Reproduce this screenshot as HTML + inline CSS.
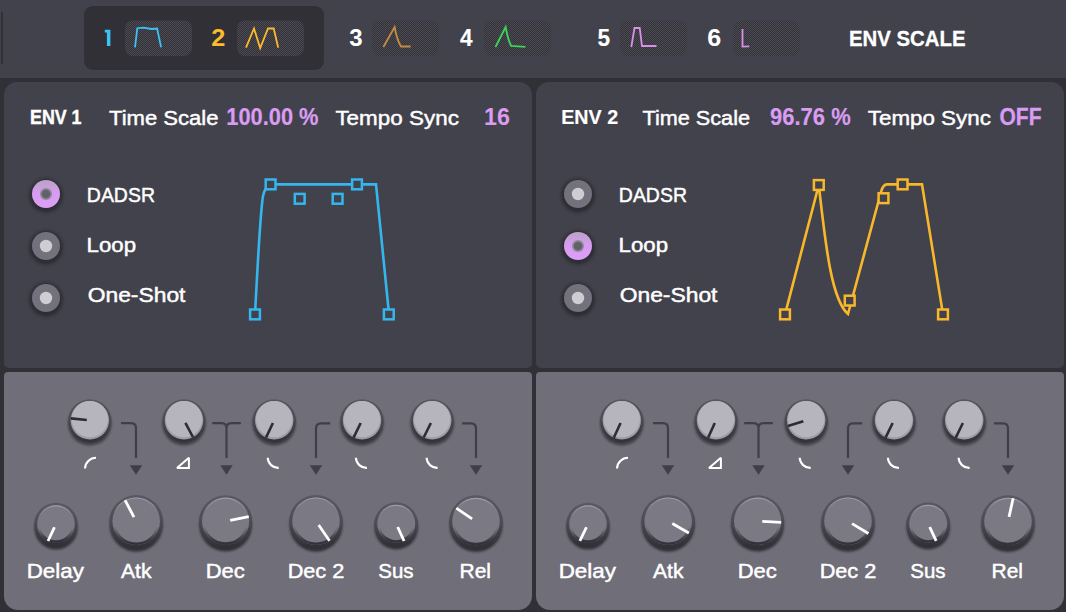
<!DOCTYPE html>
<html><head><meta charset="utf-8"><title>Envelope Editor</title>
<style>
html,body{margin:0;padding:0;}
body{width:1066px;height:612px;overflow:hidden;background:#303036;position:relative;font-family:"Liberation Sans",sans-serif;}
.topbar{position:absolute;left:0;top:0;width:1066px;height:78px;background:#42424c;}
.vbar{position:absolute;left:1px;top:12px;width:2px;height:52px;background:#313036;}
.tabgrp{position:absolute;left:84px;top:6px;width:240px;height:64px;border-radius:9px;background:#313036;}
.ptop{position:absolute;top:82px;width:528px;height:286px;background:#42424c;border-radius:13px 13px 5px 5px;}
.pbot{position:absolute;top:372px;width:528px;height:238px;background:#6f6e79;border-radius:4px 4px 14px 14px;}
svg.ov{position:absolute;left:0;top:0;}
</style></head><body>
<div class="topbar"><div class="vbar"></div><div class="tabgrp"></div></div>
<div class="ptop" style="left:4px"></div>
<div class="pbot" style="left:4px"></div>
<div class="ptop" style="left:536px"></div>
<div class="pbot" style="left:536px"></div>
<svg class="ov" width="1066" height="612" viewBox="0 0 1066 612">
<defs>
<filter id="blur1" x="-30%" y="-30%" width="160%" height="160%"><feGaussianBlur stdDeviation="1.1"/></filter>
<linearGradient id="ringg" x1="0" y1="0" x2="0" y2="1"><stop offset="0" stop-color="#58575f"/><stop offset="0.5" stop-color="#4a4951"/><stop offset="1" stop-color="#323138"/></linearGradient>
<filter id="blur05" x="-30%" y="-30%" width="160%" height="160%"><feGaussianBlur stdDeviation="0.6"/></filter>
<linearGradient id="ringd" x1="0" y1="0" x2="0" y2="1"><stop offset="0" stop-color="#5a5962"/><stop offset="0.45" stop-color="#4e4d56"/><stop offset="1" stop-color="#2f2e35"/></linearGradient>
<linearGradient id="hil" x1="0" y1="0" x2="0" y2="1"><stop offset="0" stop-color="#a39cb0" stop-opacity="0.9"/><stop offset="0.3" stop-color="#a39cb0" stop-opacity="0"/></linearGradient>
<linearGradient id="inb" x1="0" y1="0" x2="0" y2="1"><stop offset="0.62" stop-color="#33323a" stop-opacity="0"/><stop offset="0.9" stop-color="#33323a" stop-opacity="0.85"/><stop offset="1" stop-color="#33323a" stop-opacity="1"/></linearGradient>
<filter id="blur2" x="-30%" y="-30%" width="160%" height="160%"><feGaussianBlur stdDeviation="1.6"/></filter>
<linearGradient id="pinkg" x1="0" y1="0" x2="0" y2="1"><stop offset="0" stop-color="#b9a3c4"/><stop offset="0.45" stop-color="#d69cf0"/><stop offset="1" stop-color="#dc9ef6"/></linearGradient>
<pattern id="dither" width="2" height="2" patternUnits="userSpaceOnUse"><rect width="2" height="2" fill="#333238"/><rect x="0" y="0" width="1" height="1" fill="#4b4a53"/><rect x="1" y="1" width="1" height="1" fill="#4b4a53"/></pattern>
</defs>
<rect x="125" y="20.5" width="67" height="35.5" rx="8" fill="url(#dither)"/>
<rect x="237" y="20.5" width="67" height="35.5" rx="8" fill="url(#dither)"/>
<rect x="372" y="20.5" width="67" height="35.5" rx="8" fill="url(#dither)"/>
<rect x="484" y="20.5" width="67" height="35.5" rx="8" fill="url(#dither)"/>
<rect x="620" y="20.5" width="67" height="35.5" rx="8" fill="url(#dither)"/>
<rect x="733" y="20.5" width="67" height="35.5" rx="8" fill="url(#dither)"/>
<path d="M135,47.3 L137.3,28.2 L143.3,27.6 L151.5,29 L157.1,28.5 L161.1,47.3" fill="none" stroke="#3cc3f5" stroke-width="1.8"/>
<path d="M246,47.6 L254,28.5 L260.2,48 L268,28.5 L273.7,28.5 L278.2,47.6" fill="none" stroke="#fdbb2c" stroke-width="1.8"/>
<path d="M383.4,47 L394.6,27 Q397,40 401,46.5 L410.6,46.5" fill="none" stroke="#c68c40" stroke-width="1.8"/>
<path d="M495.5,47 L505.6,27 Q508,40 511.2,46 L525.4,46.8" fill="none" stroke="#3bd45a" stroke-width="1.8"/>
<path d="M631.3,47 L634.5,28 L639.7,28 L642,46 L656.5,46" fill="none" stroke="#db8fe8" stroke-width="1.8"/>
<path d="M742.5,29 L742.5,46.6 L749.3,46.3" fill="none" stroke="#db8fe8" stroke-width="1.8"/>
<circle cx="46" cy="195.5" r="17" fill="#2b2a30" filter="url(#blur2)" opacity="0.9"/>
<circle cx="46" cy="194" r="14" fill="url(#pinkg)"/>
<circle cx="46" cy="194" r="6" fill="#8a8992"/>
<circle cx="46" cy="194" r="4.3" fill="#62616a"/>
<circle cx="46" cy="247.5" r="17" fill="#2b2a30" filter="url(#blur2)" opacity="0.9"/>
<circle cx="46" cy="246" r="14" fill="#73727c"/>
<circle cx="46" cy="246" r="6.2" fill="#cdcdd3"/>
<circle cx="46" cy="299.5" r="17" fill="#2b2a30" filter="url(#blur2)" opacity="0.9"/>
<circle cx="46" cy="298" r="14" fill="#73727c"/>
<circle cx="46" cy="298" r="6.2" fill="#cdcdd3"/>
<path d="M255,314 C258,260 260,215 263,196 Q265,186 271,184.4 L376,184.4 L389,314" fill="none" stroke="#35b6ee" stroke-width="2.6"/>
<rect x="250.10" y="309.50" width="9.8" height="9.8" fill="#42424c" stroke="#35b6ee" stroke-width="2.5"/>
<rect x="265.70" y="179.50" width="9.8" height="9.8" fill="#42424c" stroke="#35b6ee" stroke-width="2.5"/>
<rect x="294.80" y="193.90" width="9.8" height="9.8" fill="#42424c" stroke="#35b6ee" stroke-width="2.5"/>
<rect x="332.70" y="193.90" width="9.8" height="9.8" fill="#42424c" stroke="#35b6ee" stroke-width="2.5"/>
<rect x="352.10" y="179.50" width="9.8" height="9.8" fill="#42424c" stroke="#35b6ee" stroke-width="2.5"/>
<rect x="383.90" y="309.50" width="9.8" height="9.8" fill="#42424c" stroke="#35b6ee" stroke-width="2.5"/>
<path d="M121,423.2 H131 Q136,423.2 136,428.2 V458" fill="none" stroke="#403f48" stroke-width="2.2"/>
<path d="M129.80,465.2 L142.20,465.2 L136.00,474.8 Z" fill="#403f48"/>
<path d="M212.2,423.2 H221.5 Q226.5,423.2 226.5,428.2 V458 M240.8,423.2 H231.5 Q226.5,423.2 226.5,428.2" fill="none" stroke="#403f48" stroke-width="2.2"/>
<path d="M220.30,465.2 L232.70,465.2 L226.50,474.8 Z" fill="#403f48"/>
<path d="M330.2,423.4 H321 Q316,423.4 316,428.4 V458" fill="none" stroke="#403f48" stroke-width="2.2"/>
<path d="M309.80,465.2 L322.20,465.2 L316.00,474.8 Z" fill="#403f48"/>
<path d="M462,423.4 H471 Q476,423.4 476,428.4 V458" fill="none" stroke="#403f48" stroke-width="2.2"/>
<path d="M469.80,465.2 L482.20,465.2 L476.00,474.8 Z" fill="#403f48"/>
<path d="M85,468.5 A11,11 0 0 1 96,457.8" fill="none" stroke="#ffffff" stroke-width="2.1"/>
<path d="M177,467.9 L188.9,467.9 L188.9,457.8 Z" fill="none" stroke="#ffffff" stroke-width="2" stroke-linejoin="miter" stroke-miterlimit="2.2"/>
<path d="M267.7,457.8 A10.5,10.5 0 0 0 278.7,467.9" fill="none" stroke="#ffffff" stroke-width="2.1"/>
<path d="M355.9,457.8 A10.5,10.5 0 0 0 366.9,467.9" fill="none" stroke="#ffffff" stroke-width="2.1"/>
<path d="M426.6,457.8 A10.5,10.5 0 0 0 437.6,467.9" fill="none" stroke="#ffffff" stroke-width="2.1"/>
<circle cx="89.8" cy="423.8" r="21.7" fill="#35343b" filter="url(#blur1)" opacity="0.8"/>
<circle cx="89.8" cy="420.90000000000003" r="21.599999999999998" fill="url(#ringg)"/>
<circle cx="89.8" cy="420.3" r="19.2" fill="#9e9da7"/>
<circle cx="89.8" cy="419.1" r="18.2" fill="#b6b5be"/>
<line x1="86.81" y1="420.00" x2="70.69" y2="418.39" stroke="#2d2c33" stroke-width="2.6" stroke-linecap="butt"/>
<circle cx="184" cy="423.8" r="21.7" fill="#35343b" filter="url(#blur1)" opacity="0.8"/>
<circle cx="184" cy="420.90000000000003" r="21.599999999999998" fill="url(#ringg)"/>
<circle cx="184" cy="420.3" r="19.2" fill="#9e9da7"/>
<circle cx="184" cy="419.1" r="18.2" fill="#b6b5be"/>
<line x1="185.41" y1="422.95" x2="193.01" y2="437.25" stroke="#2d2c33" stroke-width="2.6" stroke-linecap="butt"/>
<circle cx="274.2" cy="423.8" r="21.7" fill="#35343b" filter="url(#blur1)" opacity="0.8"/>
<circle cx="274.2" cy="420.90000000000003" r="21.599999999999998" fill="url(#ringg)"/>
<circle cx="274.2" cy="420.3" r="19.2" fill="#9e9da7"/>
<circle cx="274.2" cy="419.1" r="18.2" fill="#b6b5be"/>
<line x1="272.92" y1="423.01" x2="265.99" y2="437.66" stroke="#2d2c33" stroke-width="2.6" stroke-linecap="butt"/>
<circle cx="362" cy="423.8" r="21.7" fill="#35343b" filter="url(#blur1)" opacity="0.8"/>
<circle cx="362" cy="420.90000000000003" r="21.599999999999998" fill="url(#ringg)"/>
<circle cx="362" cy="420.3" r="19.2" fill="#9e9da7"/>
<circle cx="362" cy="419.1" r="18.2" fill="#b6b5be"/>
<line x1="360.68" y1="423.00" x2="353.58" y2="437.56" stroke="#2d2c33" stroke-width="2.6" stroke-linecap="butt"/>
<circle cx="432.2" cy="423.8" r="21.7" fill="#35343b" filter="url(#blur1)" opacity="0.8"/>
<circle cx="432.2" cy="420.90000000000003" r="21.599999999999998" fill="url(#ringg)"/>
<circle cx="432.2" cy="420.3" r="19.2" fill="#9e9da7"/>
<circle cx="432.2" cy="419.1" r="18.2" fill="#b6b5be"/>
<line x1="430.87" y1="422.99" x2="423.66" y2="437.50" stroke="#2d2c33" stroke-width="2.6" stroke-linecap="butt"/>
<circle cx="56" cy="528.2" r="21.400000000000002" fill="#2d2c33" filter="url(#blur1)" opacity="0.9"/>
<circle cx="56" cy="524.6" r="21.8" fill="url(#ringd)" filter="url(#blur05)"/>
<circle cx="56" cy="524" r="18.8" fill="#7a7984"/>
<circle cx="56" cy="524" r="18.2" fill="none" stroke="url(#hil)" stroke-width="1.2"/>
<circle cx="56" cy="524" r="17.6" fill="none" stroke="url(#inb)" stroke-width="2.6"/>
<line x1="54.47" y1="527.26" x2="48.03" y2="541.02" stroke="#ffffff" stroke-width="2.8" stroke-linecap="butt"/>
<circle cx="136.2" cy="525.4000000000001" r="26.400000000000002" fill="#2d2c33" filter="url(#blur1)" opacity="0.9"/>
<circle cx="136.2" cy="521.8000000000001" r="26.8" fill="url(#ringd)" filter="url(#blur05)"/>
<circle cx="136.2" cy="521.2" r="23.8" fill="#7a7984"/>
<circle cx="136.2" cy="521.2" r="23.2" fill="none" stroke="url(#hil)" stroke-width="1.2"/>
<circle cx="136.2" cy="521.2" r="22.6" fill="none" stroke="url(#inb)" stroke-width="2.6"/>
<line x1="133.99" y1="517.05" x2="124.99" y2="500.21" stroke="#ffffff" stroke-width="2.8" stroke-linecap="butt"/>
<circle cx="225.6" cy="525.4000000000001" r="26.200000000000003" fill="#2d2c33" filter="url(#blur1)" opacity="0.9"/>
<circle cx="225.6" cy="521.8000000000001" r="26.6" fill="url(#ringd)" filter="url(#blur05)"/>
<circle cx="225.6" cy="521.2" r="23.6" fill="#7a7984"/>
<circle cx="225.6" cy="521.2" r="23.0" fill="none" stroke="url(#hil)" stroke-width="1.2"/>
<circle cx="225.6" cy="521.2" r="22.400000000000002" fill="none" stroke="url(#inb)" stroke-width="2.6"/>
<line x1="230.21" y1="520.30" x2="248.77" y2="516.70" stroke="#ffffff" stroke-width="2.8" stroke-linecap="butt"/>
<circle cx="316" cy="525.4000000000001" r="26.400000000000002" fill="#2d2c33" filter="url(#blur1)" opacity="0.9"/>
<circle cx="316" cy="521.8000000000001" r="26.8" fill="url(#ringd)" filter="url(#blur05)"/>
<circle cx="316" cy="521.2" r="23.8" fill="#7a7984"/>
<circle cx="316" cy="521.2" r="23.2" fill="none" stroke="url(#hil)" stroke-width="1.2"/>
<circle cx="316" cy="521.2" r="22.6" fill="none" stroke="url(#inb)" stroke-width="2.6"/>
<line x1="318.67" y1="525.07" x2="329.51" y2="540.79" stroke="#ffffff" stroke-width="2.8" stroke-linecap="butt"/>
<circle cx="396.2" cy="527.9000000000001" r="21.6" fill="#2d2c33" filter="url(#blur1)" opacity="0.9"/>
<circle cx="396.2" cy="524.3000000000001" r="22" fill="url(#ringd)" filter="url(#blur05)"/>
<circle cx="396.2" cy="523.7" r="19" fill="#7a7984"/>
<circle cx="396.2" cy="523.7" r="18.4" fill="none" stroke="url(#hil)" stroke-width="1.2"/>
<circle cx="396.2" cy="523.7" r="17.8" fill="none" stroke="url(#inb)" stroke-width="2.6"/>
<line x1="397.69" y1="526.98" x2="404.05" y2="541.00" stroke="#ffffff" stroke-width="2.8" stroke-linecap="butt"/>
<circle cx="476" cy="525.7" r="26.400000000000002" fill="#2d2c33" filter="url(#blur1)" opacity="0.9"/>
<circle cx="476" cy="522.1" r="26.8" fill="url(#ringd)" filter="url(#blur05)"/>
<circle cx="476" cy="521.5" r="23.8" fill="#7a7984"/>
<circle cx="476" cy="521.5" r="23.2" fill="none" stroke="url(#hil)" stroke-width="1.2"/>
<circle cx="476" cy="521.5" r="22.6" fill="none" stroke="url(#inb)" stroke-width="2.6"/>
<line x1="472.10" y1="518.87" x2="456.27" y2="508.19" stroke="#ffffff" stroke-width="2.8" stroke-linecap="butt"/>
<circle cx="578" cy="195.5" r="17" fill="#2b2a30" filter="url(#blur2)" opacity="0.9"/>
<circle cx="578" cy="194" r="14" fill="#73727c"/>
<circle cx="578" cy="194" r="6.2" fill="#cdcdd3"/>
<circle cx="578" cy="247.5" r="17" fill="#2b2a30" filter="url(#blur2)" opacity="0.9"/>
<circle cx="578" cy="246" r="14" fill="url(#pinkg)"/>
<circle cx="578" cy="246" r="6" fill="#8a8992"/>
<circle cx="578" cy="246" r="4.3" fill="#62616a"/>
<circle cx="578" cy="299.5" r="17" fill="#2b2a30" filter="url(#blur2)" opacity="0.9"/>
<circle cx="578" cy="298" r="14" fill="#73727c"/>
<circle cx="578" cy="298" r="6.2" fill="#cdcdd3"/>
<path d="M785,314.4 L818.8,185 C826,250 832,300 848,314 L881,192 Q883,184.4 887,184.4 L922,184.4 L943,314.4" fill="none" stroke="#f9b82a" stroke-width="2.6"/>
<rect x="780.10" y="309.50" width="9.8" height="9.8" fill="#42424c" stroke="#f9b82a" stroke-width="2.5"/>
<rect x="813.90" y="180.10" width="9.8" height="9.8" fill="#42424c" stroke="#f9b82a" stroke-width="2.5"/>
<rect x="844.80" y="295.70" width="9.8" height="9.8" fill="#42424c" stroke="#f9b82a" stroke-width="2.5"/>
<rect x="878.60" y="193.30" width="9.8" height="9.8" fill="#42424c" stroke="#f9b82a" stroke-width="2.5"/>
<rect x="897.70" y="179.50" width="9.8" height="9.8" fill="#42424c" stroke="#f9b82a" stroke-width="2.5"/>
<rect x="938.10" y="309.50" width="9.8" height="9.8" fill="#42424c" stroke="#f9b82a" stroke-width="2.5"/>
<path d="M653,423.2 H663 Q668,423.2 668,428.2 V458" fill="none" stroke="#403f48" stroke-width="2.2"/>
<path d="M661.80,465.2 L674.20,465.2 L668.00,474.8 Z" fill="#403f48"/>
<path d="M744.2,423.2 H753.5 Q758.5,423.2 758.5,428.2 V458 M772.8,423.2 H763.5 Q758.5,423.2 758.5,428.2" fill="none" stroke="#403f48" stroke-width="2.2"/>
<path d="M752.30,465.2 L764.70,465.2 L758.50,474.8 Z" fill="#403f48"/>
<path d="M862.2,423.4 H853 Q848,423.4 848,428.4 V458" fill="none" stroke="#403f48" stroke-width="2.2"/>
<path d="M841.80,465.2 L854.20,465.2 L848.00,474.8 Z" fill="#403f48"/>
<path d="M994,423.4 H1003 Q1008,423.4 1008,428.4 V458" fill="none" stroke="#403f48" stroke-width="2.2"/>
<path d="M1001.80,465.2 L1014.20,465.2 L1008.00,474.8 Z" fill="#403f48"/>
<path d="M617,468.5 A11,11 0 0 1 628,457.8" fill="none" stroke="#ffffff" stroke-width="2.1"/>
<path d="M709,467.9 L720.9,467.9 L720.9,457.8 Z" fill="none" stroke="#ffffff" stroke-width="2" stroke-linejoin="miter" stroke-miterlimit="2.2"/>
<path d="M799.7,457.8 A10.5,10.5 0 0 0 810.7,467.9" fill="none" stroke="#ffffff" stroke-width="2.1"/>
<path d="M887.9,457.8 A10.5,10.5 0 0 0 898.9,467.9" fill="none" stroke="#ffffff" stroke-width="2.1"/>
<path d="M958.6,457.8 A10.5,10.5 0 0 0 969.6,467.9" fill="none" stroke="#ffffff" stroke-width="2.1"/>
<circle cx="621.8" cy="423.8" r="21.7" fill="#35343b" filter="url(#blur1)" opacity="0.8"/>
<circle cx="621.8" cy="420.90000000000003" r="21.599999999999998" fill="url(#ringg)"/>
<circle cx="621.8" cy="420.3" r="19.2" fill="#9e9da7"/>
<circle cx="621.8" cy="419.1" r="18.2" fill="#b6b5be"/>
<line x1="620.55" y1="423.03" x2="613.81" y2="437.76" stroke="#2d2c33" stroke-width="2.6" stroke-linecap="butt"/>
<circle cx="716" cy="423.8" r="21.7" fill="#35343b" filter="url(#blur1)" opacity="0.8"/>
<circle cx="716" cy="420.90000000000003" r="21.599999999999998" fill="url(#ringg)"/>
<circle cx="716" cy="420.3" r="19.2" fill="#9e9da7"/>
<circle cx="716" cy="419.1" r="18.2" fill="#b6b5be"/>
<line x1="714.77" y1="423.03" x2="708.10" y2="437.80" stroke="#2d2c33" stroke-width="2.6" stroke-linecap="butt"/>
<circle cx="806.2" cy="423.8" r="21.7" fill="#35343b" filter="url(#blur1)" opacity="0.8"/>
<circle cx="806.2" cy="420.90000000000003" r="21.599999999999998" fill="url(#ringg)"/>
<circle cx="806.2" cy="420.3" r="19.2" fill="#9e9da7"/>
<circle cx="806.2" cy="419.1" r="18.2" fill="#b6b5be"/>
<line x1="803.34" y1="421.21" x2="787.90" y2="426.11" stroke="#2d2c33" stroke-width="2.6" stroke-linecap="butt"/>
<circle cx="894" cy="423.8" r="21.7" fill="#35343b" filter="url(#blur1)" opacity="0.8"/>
<circle cx="894" cy="420.90000000000003" r="21.599999999999998" fill="url(#ringg)"/>
<circle cx="894" cy="420.3" r="19.2" fill="#9e9da7"/>
<circle cx="894" cy="419.1" r="18.2" fill="#b6b5be"/>
<line x1="892.68" y1="423.00" x2="885.58" y2="437.56" stroke="#2d2c33" stroke-width="2.6" stroke-linecap="butt"/>
<circle cx="964.2" cy="423.8" r="21.7" fill="#35343b" filter="url(#blur1)" opacity="0.8"/>
<circle cx="964.2" cy="420.90000000000003" r="21.599999999999998" fill="url(#ringg)"/>
<circle cx="964.2" cy="420.3" r="19.2" fill="#9e9da7"/>
<circle cx="964.2" cy="419.1" r="18.2" fill="#b6b5be"/>
<line x1="962.88" y1="423.00" x2="955.78" y2="437.56" stroke="#2d2c33" stroke-width="2.6" stroke-linecap="butt"/>
<circle cx="588" cy="528.2" r="21.400000000000002" fill="#2d2c33" filter="url(#blur1)" opacity="0.9"/>
<circle cx="588" cy="524.6" r="21.8" fill="url(#ringd)" filter="url(#blur05)"/>
<circle cx="588" cy="524" r="18.8" fill="#7a7984"/>
<circle cx="588" cy="524" r="18.2" fill="none" stroke="url(#hil)" stroke-width="1.2"/>
<circle cx="588" cy="524" r="17.6" fill="none" stroke="url(#inb)" stroke-width="2.6"/>
<line x1="586.44" y1="527.25" x2="579.88" y2="540.95" stroke="#ffffff" stroke-width="2.8" stroke-linecap="butt"/>
<circle cx="668.2" cy="525.4000000000001" r="26.400000000000002" fill="#2d2c33" filter="url(#blur1)" opacity="0.9"/>
<circle cx="668.2" cy="521.8000000000001" r="26.8" fill="url(#ringd)" filter="url(#blur05)"/>
<circle cx="668.2" cy="521.2" r="23.8" fill="#7a7984"/>
<circle cx="668.2" cy="521.2" r="23.2" fill="none" stroke="url(#hil)" stroke-width="1.2"/>
<circle cx="668.2" cy="521.2" r="22.6" fill="none" stroke="url(#inb)" stroke-width="2.6"/>
<line x1="672.29" y1="523.52" x2="688.89" y2="532.96" stroke="#ffffff" stroke-width="2.8" stroke-linecap="butt"/>
<circle cx="757.6" cy="525.4000000000001" r="26.200000000000003" fill="#2d2c33" filter="url(#blur1)" opacity="0.9"/>
<circle cx="757.6" cy="521.8000000000001" r="26.6" fill="url(#ringd)" filter="url(#blur05)"/>
<circle cx="757.6" cy="521.2" r="23.6" fill="#7a7984"/>
<circle cx="757.6" cy="521.2" r="23.0" fill="none" stroke="url(#hil)" stroke-width="1.2"/>
<circle cx="757.6" cy="521.2" r="22.400000000000002" fill="none" stroke="url(#inb)" stroke-width="2.6"/>
<line x1="762.29" y1="521.44" x2="781.17" y2="522.39" stroke="#ffffff" stroke-width="2.8" stroke-linecap="butt"/>
<circle cx="848" cy="525.4000000000001" r="26.400000000000002" fill="#2d2c33" filter="url(#blur1)" opacity="0.9"/>
<circle cx="848" cy="521.8000000000001" r="26.8" fill="url(#ringd)" filter="url(#blur05)"/>
<circle cx="848" cy="521.2" r="23.8" fill="#7a7984"/>
<circle cx="848" cy="521.2" r="23.2" fill="none" stroke="url(#hil)" stroke-width="1.2"/>
<circle cx="848" cy="521.2" r="22.6" fill="none" stroke="url(#inb)" stroke-width="2.6"/>
<line x1="852.03" y1="523.62" x2="868.40" y2="533.46" stroke="#ffffff" stroke-width="2.8" stroke-linecap="butt"/>
<circle cx="928.2" cy="527.9000000000001" r="21.6" fill="#2d2c33" filter="url(#blur1)" opacity="0.9"/>
<circle cx="928.2" cy="524.3000000000001" r="22" fill="url(#ringd)" filter="url(#blur05)"/>
<circle cx="928.2" cy="523.7" r="19" fill="#7a7984"/>
<circle cx="928.2" cy="523.7" r="18.4" fill="none" stroke="url(#hil)" stroke-width="1.2"/>
<circle cx="928.2" cy="523.7" r="17.8" fill="none" stroke="url(#inb)" stroke-width="2.6"/>
<line x1="929.70" y1="526.97" x2="936.14" y2="540.96" stroke="#ffffff" stroke-width="2.8" stroke-linecap="butt"/>
<circle cx="1008" cy="525.7" r="26.400000000000002" fill="#2d2c33" filter="url(#blur1)" opacity="0.9"/>
<circle cx="1008" cy="522.1" r="26.8" fill="url(#ringd)" filter="url(#blur05)"/>
<circle cx="1008" cy="521.5" r="23.8" fill="#7a7984"/>
<circle cx="1008" cy="521.5" r="23.2" fill="none" stroke="url(#hil)" stroke-width="1.2"/>
<circle cx="1008" cy="521.5" r="22.6" fill="none" stroke="url(#inb)" stroke-width="2.6"/>
<line x1="1009.02" y1="516.91" x2="1013.15" y2="498.26" stroke="#ffffff" stroke-width="2.8" stroke-linecap="butt"/>
<text transform="translate(211.33,46.00) scale(1.0727,1)" font-family="Liberation Sans" font-weight="bold" font-size="23.62" fill="#fdbb2c">2</text>
<text transform="translate(349.28,46.00) scale(1.0182,1)" font-family="Liberation Sans" font-weight="bold" font-size="23.62" fill="#ffffff">3</text>
<text transform="translate(459.90,46.00) scale(0.9538,1)" font-family="Liberation Sans" font-weight="bold" font-size="23.62" fill="#ffffff" stroke="#ffffff" stroke-width="0.14">4</text>
<text transform="translate(597.54,46.00) scale(0.9583,1)" font-family="Liberation Sans" font-weight="bold" font-size="23.62" fill="#ffffff" stroke="#ffffff" stroke-width="0.12">5</text>
<text transform="translate(707.24,46.00) scale(1.0636,1)" font-family="Liberation Sans" font-weight="bold" font-size="23.62" fill="#ffffff">6</text>
<text transform="translate(848.90,46.40) scale(0.9016,1)" font-family="Liberation Sans" font-weight="bold" font-size="22.61" fill="#ffffff" stroke="#ffffff" stroke-width="0.30">ENV SCALE</text>
<text transform="translate(30.05,124.00) scale(0.8542,1)" font-family="Liberation Sans" font-weight="bold" font-size="20.87" fill="#ffffff" stroke="#ffffff" stroke-width="0.44">ENV 1</text>
<text transform="translate(109.00,124.50) scale(1.0647,1)" font-family="Liberation Sans" font-weight="normal" font-size="20.72" fill="#ffffff" stroke="#ffffff" stroke-width="0.45">Time Scale</text>
<text transform="translate(226.36,124.80) scale(0.9351,1)" font-family="Liberation Sans" font-weight="bold" font-size="23.33" fill="#d99cf2" stroke="#d99cf2" stroke-width="0.19">100.00 %</text>
<text transform="translate(335.40,124.50) scale(1.0841,1)" font-family="Liberation Sans" font-weight="normal" font-size="20.72" fill="#ffffff" stroke="#ffffff" stroke-width="0.45">Tempo Sync</text>
<text transform="translate(484.10,124.80) scale(1.0000,1)" font-family="Liberation Sans" font-weight="bold" font-size="23.33" fill="#d99cf2">16</text>
<text transform="translate(561.26,124.00) scale(0.9424,1)" font-family="Liberation Sans" font-weight="bold" font-size="20.87" fill="#ffffff" stroke="#ffffff" stroke-width="0.17">ENV 2</text>
<text transform="translate(642.50,124.50) scale(1.0461,1)" font-family="Liberation Sans" font-weight="normal" font-size="20.72" fill="#ffffff" stroke="#ffffff" stroke-width="0.45">Time Scale</text>
<text transform="translate(770.06,124.80) scale(0.9417,1)" font-family="Liberation Sans" font-weight="bold" font-size="23.33" fill="#d99cf2" stroke="#d99cf2" stroke-width="0.17">96.76 %</text>
<text transform="translate(867.80,124.50) scale(1.0796,1)" font-family="Liberation Sans" font-weight="normal" font-size="20.72" fill="#ffffff" stroke="#ffffff" stroke-width="0.45">Tempo Sync</text>
<text transform="translate(999.50,124.80) scale(0.9000,1)" font-family="Liberation Sans" font-weight="bold" font-size="23.33" fill="#d99cf2" stroke="#d99cf2" stroke-width="0.30">OFF</text>
<text transform="translate(86.85,202.30) scale(0.9731,1)" font-family="Liberation Sans" font-weight="normal" font-size="20.00" fill="#ffffff" stroke="#ffffff" stroke-width="0.45">DADSR</text>
<text transform="translate(86.58,252.20) scale(1.1119,1)" font-family="Liberation Sans" font-weight="normal" font-size="20.00" fill="#ffffff" stroke="#ffffff" stroke-width="0.45">Loop</text>
<text transform="translate(87.66,301.80) scale(1.1429,1)" font-family="Liberation Sans" font-weight="normal" font-size="20.00" fill="#ffffff" stroke="#ffffff" stroke-width="0.45">One-Shot</text>
<text transform="translate(618.85,202.30) scale(0.9731,1)" font-family="Liberation Sans" font-weight="normal" font-size="20.00" fill="#ffffff" stroke="#ffffff" stroke-width="0.45">DADSR</text>
<text transform="translate(618.58,252.20) scale(1.1119,1)" font-family="Liberation Sans" font-weight="normal" font-size="20.00" fill="#ffffff" stroke="#ffffff" stroke-width="0.45">Loop</text>
<text transform="translate(619.66,301.80) scale(1.1429,1)" font-family="Liberation Sans" font-weight="normal" font-size="20.00" fill="#ffffff" stroke="#ffffff" stroke-width="0.45">One-Shot</text>
<text transform="translate(26.66,578.00) scale(1.1204,1)" font-family="Liberation Sans" font-weight="normal" font-size="20.00" fill="#ffffff" stroke="#ffffff" stroke-width="0.45">Delay</text>
<text transform="translate(121.00,578.00) scale(1.0552,1)" font-family="Liberation Sans" font-weight="normal" font-size="20.00" fill="#ffffff" stroke="#ffffff" stroke-width="0.45">Atk</text>
<text transform="translate(205.70,578.00) scale(1.1000,1)" font-family="Liberation Sans" font-weight="normal" font-size="20.00" fill="#ffffff" stroke="#ffffff" stroke-width="0.45">Dec</text>
<text transform="translate(287.63,578.00) scale(1.0857,1)" font-family="Liberation Sans" font-weight="normal" font-size="20.00" fill="#ffffff" stroke="#ffffff" stroke-width="0.45">Dec 2</text>
<text transform="translate(378.28,578.00) scale(1.0242,1)" font-family="Liberation Sans" font-weight="normal" font-size="20.00" fill="#ffffff" stroke="#ffffff" stroke-width="0.45">Sus</text>
<text transform="translate(459.60,578.00) scale(1.0481,1)" font-family="Liberation Sans" font-weight="normal" font-size="20.00" fill="#ffffff" stroke="#ffffff" stroke-width="0.45">Rel</text>
<text transform="translate(558.66,578.00) scale(1.1204,1)" font-family="Liberation Sans" font-weight="normal" font-size="20.00" fill="#ffffff" stroke="#ffffff" stroke-width="0.45">Delay</text>
<text transform="translate(653.00,578.00) scale(1.0552,1)" font-family="Liberation Sans" font-weight="normal" font-size="20.00" fill="#ffffff" stroke="#ffffff" stroke-width="0.45">Atk</text>
<text transform="translate(737.70,578.00) scale(1.1000,1)" font-family="Liberation Sans" font-weight="normal" font-size="20.00" fill="#ffffff" stroke="#ffffff" stroke-width="0.45">Dec</text>
<text transform="translate(819.63,578.00) scale(1.0857,1)" font-family="Liberation Sans" font-weight="normal" font-size="20.00" fill="#ffffff" stroke="#ffffff" stroke-width="0.45">Dec 2</text>
<text transform="translate(910.28,578.00) scale(1.0242,1)" font-family="Liberation Sans" font-weight="normal" font-size="20.00" fill="#ffffff" stroke="#ffffff" stroke-width="0.45">Sus</text>
<text transform="translate(991.60,578.00) scale(1.0481,1)" font-family="Liberation Sans" font-weight="normal" font-size="20.00" fill="#ffffff" stroke="#ffffff" stroke-width="0.45">Rel</text>
<path d="M104.8,29.8 H110.4 V46.1 H106.9 V32.6 H104.8 Z" fill="#3cc3f5"/>
</svg>
</body></html>
